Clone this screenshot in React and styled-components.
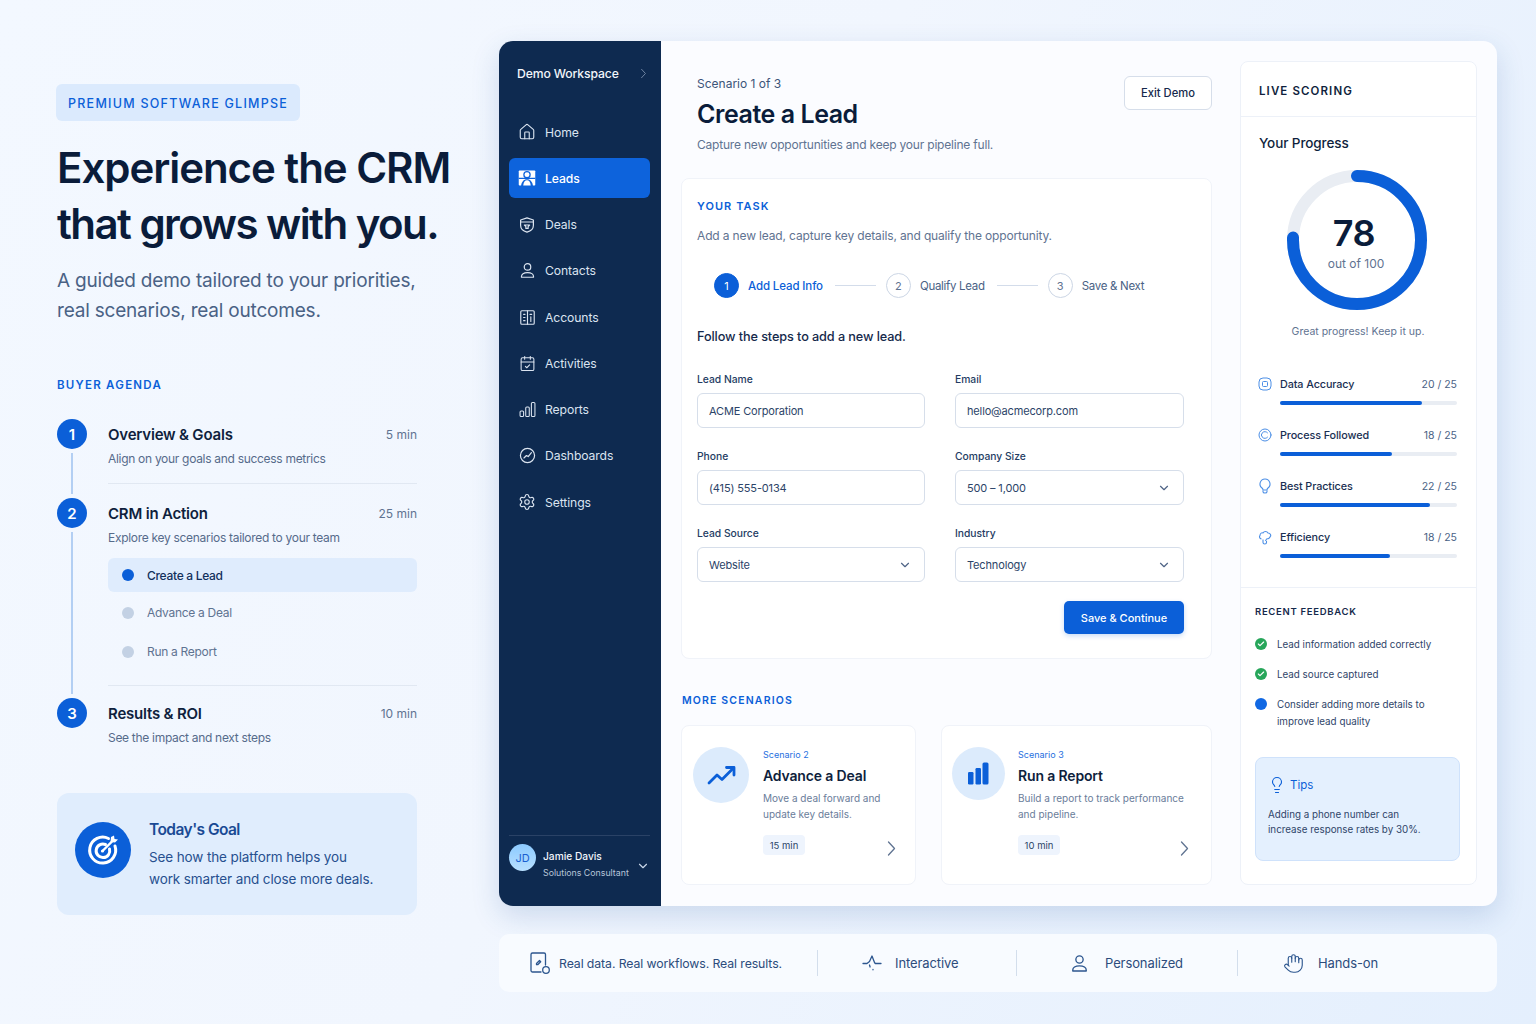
import styled, { createGlobalStyle } from "styled-components";
import {
  Home,
  CalendarCheck,
  Settings,
  Lightbulb,
  Hand,
  ChevronDown,
  Check,
} from "lucide-react";

const GlobalStyle = createGlobalStyle`
  * { box-sizing: border-box; }
  html, body { margin: 0; padding: 0; }
  body {
    font-family: Inter, "Liberation Sans", sans-serif;
    color: #0d1f3c;
  }
  p, h1, h2, h3 { margin: 0; font-weight: inherit; }
`;

function UserGlyph({ size = 18 }) {
  return (
    <svg width={size} height={size} viewBox="0 0 24 24" fill="none" stroke="currentColor" strokeWidth="1.7">
      <circle cx="12" cy="7" r="4.6" />
      <path d="M3.5 21.5v-1.2c0-3.2 3-5.3 8.500-5.300s8.500 2.100 8.500 5.300v1.200z" strokeLinejoin="round" />
    </svg>
  );
}

function LeadsGlyph() {
  return (
    <svg width="18" height="18" viewBox="0 0 24 24">
      <rect x="1" y="2" width="22" height="20" rx="1" fill="#fff" />
      <path d="M1 12.500h22" stroke="#0d63dc" strokeWidth="1.600" />
      <path d="M4 23c.5-6 3.500-9.500 8-9.500s7.500 3.500 8 9.500z" fill="#0d63dc" />
      <path d="M7 22c.4-4.500 2.300-7 5-7s4.600 2.500 5 7z" fill="#fff" />
      <circle cx="12" cy="7.500" r="5" fill="#0d63dc" />
      <circle cx="12" cy="7.500" r="3.300" fill="#fff" />
    </svg>
  );
}

function DealsGlyph() {
  return (
    <svg width="18" height="18" viewBox="0 0 24 24" fill="none" stroke="currentColor" strokeWidth="1.6" strokeLinejoin="round" strokeLinecap="round">
      <path d="M12 2.500l8.500 2.800v7.200c0 4.500-3.600 7.500-8.500 9-4.900-1.500-8.500-4.500-8.500-9V5.300z" />
      <path d="M3.800 8h16.400M8.500 12h7l-2 2v2.500h-3V14z" />
    </svg>
  );
}

function AccountsGlyph() {
  return (
    <svg width="17" height="17" viewBox="0 0 24 24" fill="none" stroke="currentColor" strokeWidth="1.6" strokeLinecap="round">
      <rect x="2.500" y="2.500" width="19" height="19" rx="1.500" />
      <path d="M12 2.500v19M6.500 7.500h2M6.500 12h2M6.500 16.500h2M15.500 7.500h2.500M16.700 11v6.500" />
    </svg>
  );
}

function ReportsGlyph() {
  return (
    <svg width="17" height="17" viewBox="0 0 24 24" fill="none" stroke="currentColor" strokeWidth="1.5">
      <rect x="1.500" y="14" width="5" height="8" rx="1.500" />
      <rect x="9.500" y="8.500" width="5" height="13.500" rx="1.500" />
      <rect x="17.500" y="2" width="5" height="20" rx="1.500" />
    </svg>
  );
}

function DashboardGlyph() {
  return (
    <svg width="17" height="17" viewBox="0 0 24 24" fill="none" stroke="currentColor" strokeWidth="1.7" strokeLinecap="round" strokeLinejoin="round">
      <circle cx="12" cy="12" r="10" />
      <path d="M7 15.500l3.500-3.500 2.500 1.500L17.500 8" />
    </svg>
  );
}

function Chevron({ color = "#5f7391" }) {
  return (
    <svg width="9" height="15" viewBox="0 0 9 15" fill="none" stroke={color} strokeWidth="1.3" strokeLinecap="round" strokeLinejoin="round">
      <path d="M1.500 1l6 6.500-6 6.500" />
    </svg>
  );
}

function TargetGlyph() {
  return (
    <svg width="34" height="34" viewBox="0 0 34 34" fill="none" stroke="#fff" strokeWidth="3" strokeLinecap="round">
      <path d="M22.500 5.500A13 13 0 1 0 29 13" />
      <path d="M19.500 11.500A6.800 6.800 0 1 0 23.500 16" />
      <circle cx="16.500" cy="18" r="1.600" fill="#fff" stroke="none" />
      <path d="M17 17.500L27 7.500" strokeWidth="2.400" />
      <path d="M25 4l-.5 5 4.500.5 3-3-3.500-.5-.5-3.500z" fill="#fff" stroke="none" />
    </svg>
  );
}

function TrendGlyph() {
  return (
    <svg width="29" height="20" viewBox="0 0 29 20" fill="none" stroke="#0b5fd8" strokeWidth="2.800" strokeLinecap="round" strokeLinejoin="round">
      <path d="M2 18l8-8 5 4.500L26.500 3" />
      <path d="M19.500 2.500h7.500V10" />
    </svg>
  );
}

function BarsGlyph() {
  return (
    <svg width="21" height="23" viewBox="0 0 21 23" fill="#0b5fd8">
      <rect x="0" y="10" width="5.500" height="12.500" rx="1.200" />
      <rect x="7.500" y="6" width="5.500" height="16.500" rx="1.200" />
      <rect x="14.500" y="0.500" width="6" height="22" rx="1.500" />
    </svg>
  );
}

function AccuracyGlyph() {
  return (
    <svg width="14" height="14" viewBox="0 0 14 14" fill="none" stroke="#4c8fe6" strokeWidth="1">
      <rect x="1" y="1" width="12" height="12" rx="4" />
      <rect x="4.500" y="4.500" width="5" height="5" rx="1" />
    </svg>
  );
}

function ProcessGlyph() {
  return (
    <svg width="14" height="14" viewBox="0 0 14 14" fill="none" stroke="#4c8fe6" strokeWidth="1" strokeLinecap="round">
      <circle cx="7" cy="7" r="6" />
      <path d="M9.500 4.800A3.400 3.400 0 1 0 9.500 9.200" />
    </svg>
  );
}

function BulbGlyph() {
  return (
    <svg width="14" height="16" viewBox="0 0 14 16" fill="none" stroke="#4c8fe6" strokeWidth="1.100" strokeLinejoin="round">
      <path d="M7 1a5 5 0 0 0-3 9c.6.5 1 1.100 1 2h4c0-.9.4-1.500 1-2a5 5 0 0 0-3-9z" />
      <path d="M5 12.500v1.200c0 .7.800 1.300 2 1.300s2-.6 2-1.300v-1.200" />
    </svg>
  );
}

function EfficiencyGlyph() {
  return (
    <svg width="14" height="15" viewBox="0 0 14 15" fill="none" stroke="#4c8fe6" strokeWidth="1.100" strokeLinejoin="round">
      <path d="M3.500 9C1.500 8.500 1 6.500 2 5.500 2 3 4 2.500 5 3c1-2 4-2 5 0 2.500 0 3.500 2.500 2 4-.5 1.500-2 2-3.500 2 0 1-.5 1.500-1.500 1.500" />
      <path d="M5 9.500v3c0 1 .8 1.500 1.800 1.500s1.700-.5 1.700-1.500V11" />
    </svg>
  );
}

function TabletGlyph() {
  return (
    <svg width="22" height="24" viewBox="0 0 22 24" fill="none" stroke="#2c568f" strokeWidth="1.300" strokeLinecap="round" strokeLinejoin="round">
      <path d="M12 21H3.500A1.500 1.500 0 0 1 2 19.500v-16A1.500 1.500 0 0 1 3.500 2h11.500A1.500 1.500 0 0 1 16.500 3.500V14" />
      <path d="M7.500 12.500l3-3 1.200 1.200-3 3H7.500z" />
      <circle cx="17" cy="19" r="3.300" />
    </svg>
  );
}

function PulseGlyph() {
  return (
    <svg width="20" height="18" viewBox="0 0 20 18" fill="none" stroke="#2c568f" strokeWidth="1.300" strokeLinecap="round" strokeLinejoin="round">
      <path d="M1 9.500h4l2.500-2L10 2l2.500 6.500.8 1H19" />
      <path d="M7.500 11l.6 2M11 15.500v.3" />
    </svg>
  );
}

const agenda = [
  { n: 1, title: "Overview & Goals", time: "5 min", desc: "Align on your goals and success metrics", divider: true },
  {
    n: 2,
    title: "CRM in Action",
    time: "25 min",
    desc: "Explore key scenarios tailored to your team",
    subs: ["Create a Lead", "Advance a Deal", "Run a Report"],
    divider: true,
  },
  { n: 3, title: "Results & ROI", time: "10 min", desc: "See the impact and next steps" },
];

const navItems = [
  { label: "Home", icon: <Home size={18} strokeWidth={1.5} /> },
  { label: "Leads", icon: <LeadsGlyph />, active: true },
  { label: "Deals", icon: <DealsGlyph /> },
  { label: "Contacts", icon: <UserGlyph size={17} /> },
  { label: "Accounts", icon: <AccountsGlyph /> },
  { label: "Activities", icon: <CalendarCheck size={17} strokeWidth={1.5} /> },
  { label: "Reports", icon: <ReportsGlyph /> },
  { label: "Dashboards", icon: <DashboardGlyph /> },
  { label: "Settings", icon: <Settings size={18} strokeWidth={1.5} /> },
];

const scores = [
  { label: "Data Accuracy", value: "20 / 25", pct: 80, icon: <AccuracyGlyph /> },
  { label: "Process Followed", value: "18 / 25", pct: 63, icon: <ProcessGlyph /> },
  { label: "Best Practices", value: "22 / 25", pct: 85, icon: <BulbGlyph /> },
  { label: "Efficiency", value: "18 / 25", pct: 62, icon: <EfficiencyGlyph /> },
];

const ringLength = 2 * Math.PI * 64;

function App() {
  return (
    <Page>
      <GlobalStyle />
      <Intro>
        <Badge>PREMIUM SOFTWARE GLIMPSE</Badge>
        <Headline>
          <HeadlineLine>Experience the CRM</HeadlineLine>
          <HeadlineLine $tight>that grows with you.</HeadlineLine>
        </Headline>
        <Lead>
          A guided demo tailored to your priorities,
          <br />
          real scenarios, real outcomes.
        </Lead>
        <AgendaLabel>BUYER AGENDA</AgendaLabel>
        <Agenda>
          {agenda.map((step, i) => (
            <Step key={step.n}>
              <Rail>
                <StepNumber>{step.n}</StepNumber>
                {i < agenda.length - 1 && <RailLine />}
              </Rail>
              <StepBody>
                <StepHead>
                  <StepTitle>{step.title}</StepTitle>
                  <StepTime>{step.time}</StepTime>
                </StepHead>
                <StepDesc>{step.desc}</StepDesc>
                {step.subs && (
                  <SubList>
                    {step.subs.map((s, j) => (
                      <SubItem key={s} $active={j === 0}>
                        <SubDot $active={j === 0} />
                        {s}
                      </SubItem>
                    ))}
                  </SubList>
                )}
                {step.divider && <StepRule $sub={!!step.subs} />}
              </StepBody>
            </Step>
          ))}
        </Agenda>
        <GoalCard>
          <GoalIcon>
            <TargetGlyph />
          </GoalIcon>
          <div>
            <GoalTitle>Today's Goal</GoalTitle>
            <GoalText>
              See how the platform helps you
              <br />
              work smarter and close more deals.
            </GoalText>
          </div>
        </GoalCard>
      </Intro>

      <Stage>
        <Shell>
          <Sidebar>
            <Workspace>
              Demo Workspace
              <Chevron color="#7f93b0" />
            </Workspace>
            <NavList>
              {navItems.map((item) => (
                <NavItem key={item.label} $active={item.active}>
                  <NavIcon>{item.icon}</NavIcon>
                  {item.label}
                </NavItem>
              ))}
            </NavList>
            <Profile>
              <Avatar>JD</Avatar>
              <ProfileText>
                <ProfileName>Jamie Davis</ProfileName>
                <ProfileRole>Solutions Consultant</ProfileRole>
              </ProfileText>
              <ChevronDown size={14} color="#c9d6e8" />
            </Profile>
          </Sidebar>

          <Main>
            <Center>
              <Header>
                <div>
                  <ScenarioCount>Scenario 1 of 3</ScenarioCount>
                  <PageTitle>Create a Lead</PageTitle>
                  <PageSub>Capture new opportunities and keep your pipeline full.</PageSub>
                </div>
                <ExitButton>Exit Demo</ExitButton>
              </Header>

              <TaskCard>
                <TaskLabel>YOUR TASK</TaskLabel>
                <TaskDesc>Add a new lead, capture key details, and qualify the opportunity.</TaskDesc>
                <Stepper>
                  <StepDot $active>1</StepDot>
                  <StepName $active>Add Lead Info</StepName>
                  <StepLink />
                  <StepDot>2</StepDot>
                  <StepName>Qualify Lead</StepName>
                  <StepLink />
                  <StepDot>3</StepDot>
                  <StepName>Save &amp; Next</StepName>
                </Stepper>
                <FollowText>Follow the steps to add a new lead.</FollowText>
                <FormGrid>
                  <Field>
                    <FieldLabel>Lead Name</FieldLabel>
                    <FieldBox>ACME Corporation</FieldBox>
                  </Field>
                  <Field>
                    <FieldLabel>Email</FieldLabel>
                    <FieldBox>hello@acmecorp.com</FieldBox>
                  </Field>
                  <Field>
                    <FieldLabel>Phone</FieldLabel>
                    <FieldBox>(415) 555-0134</FieldBox>
                  </Field>
                  <Field>
                    <FieldLabel>Company Size</FieldLabel>
                    <FieldBox>
                      500 – 1,000
                      <ChevronDown size={14} color="#4f6486" />
                    </FieldBox>
                  </Field>
                  <Field>
                    <FieldLabel>Lead Source</FieldLabel>
                    <FieldBox>
                      Website
                      <ChevronDown size={14} color="#4f6486" />
                    </FieldBox>
                  </Field>
                  <Field>
                    <FieldLabel>Industry</FieldLabel>
                    <FieldBox>
                      Technology
                      <ChevronDown size={14} color="#4f6486" />
                    </FieldBox>
                  </Field>
                </FormGrid>
                <FormActions>
                  <SaveButton>Save &amp; Continue</SaveButton>
                </FormActions>
              </TaskCard>

              <MoreLabel>MORE SCENARIOS</MoreLabel>
              <ScenarioGrid>
                <ScenarioCard $left={11} $right={19}>
                  <ScenarioIcon $size={56} $after={14}>
                    <TrendGlyph />
                  </ScenarioIcon>
                  <ScenarioText>
                    <ScenarioTag>Scenario 2</ScenarioTag>
                    <ScenarioTitle>Advance a Deal</ScenarioTitle>
                    <ScenarioDesc>
                      Move a deal forward and
                      <br />
                      update key details.
                    </ScenarioDesc>
                    <ScenarioFoot>
                      <TimePill>15 min</TimePill>
                      <ChevronSlot>
                        <Chevron />
                      </ChevronSlot>
                    </ScenarioFoot>
                  </ScenarioText>
                </ScenarioCard>
                <ScenarioCard $left={10} $right={22}>
                  <ScenarioIcon $size={53} $after={13}>
                    <BarsGlyph />
                  </ScenarioIcon>
                  <ScenarioText>
                    <ScenarioTag>Scenario 3</ScenarioTag>
                    <ScenarioTitle>Run a Report</ScenarioTitle>
                    <ScenarioDesc>
                      Build a report to track performance
                      <br />
                      and pipeline.
                    </ScenarioDesc>
                    <ScenarioFoot>
                      <TimePill>10 min</TimePill>
                      <ChevronSlot>
                        <Chevron />
                      </ChevronSlot>
                    </ScenarioFoot>
                  </ScenarioText>
                </ScenarioCard>
              </ScenarioGrid>
            </Center>

            <ScorePanel>
              <ScoreHeader>LIVE SCORING</ScoreHeader>
              <ScoreBody>
                <ProgressTitle>Your Progress</ProgressTitle>
                <Ring>
                  <svg width="140" height="140" viewBox="0 0 140 140">
                    <circle cx="70" cy="70" r="64" fill="none" stroke="#e9edf3" strokeWidth="12" />
                    <circle
                      cx="70"
                      cy="70"
                      r="64"
                      fill="none"
                      stroke="#0b5fd8"
                      strokeWidth="12"
                      strokeLinecap="round"
                      strokeDasharray={`${ringLength * 0.755} ${ringLength}`}
                      transform="rotate(-90 70 70)"
                    />
                  </svg>
                  <RingCenter>
                    <RingValue>78</RingValue>
                    <RingOf>out of 100</RingOf>
                  </RingCenter>
                </Ring>
                <RingNote>Great progress! Keep it up.</RingNote>
                <ScoreList>
                  {scores.map((s) => (
                    <div key={s.label}>
                      <ScoreRow>
                        <ScoreIcon>{s.icon}</ScoreIcon>
                        <ScoreName>{s.label}</ScoreName>
                        <ScoreValue>{s.value}</ScoreValue>
                      </ScoreRow>
                      <ScoreTrack>
                        <ScoreFill style={{ width: `${s.pct}%` }} />
                      </ScoreTrack>
                    </div>
                  ))}
                </ScoreList>
              </ScoreBody>
              <FeedbackSection>
                <FeedbackTitle>RECENT FEEDBACK</FeedbackTitle>
                <FeedbackList>
                  <FeedbackRow>
                    <FeedbackMark $ok>
                      <Check size={8} strokeWidth={3.5} color="#fff" />
                    </FeedbackMark>
                    Lead information added correctly
                  </FeedbackRow>
                  <FeedbackRow>
                    <FeedbackMark $ok>
                      <Check size={8} strokeWidth={3.5} color="#fff" />
                    </FeedbackMark>
                    Lead source captured
                  </FeedbackRow>
                  <FeedbackRow>
                    <FeedbackMark />
                    <span>
                      Consider adding more details to
                      <br />
                      improve lead quality
                    </span>
                  </FeedbackRow>
                </FeedbackList>
                <TipsCard>
                  <TipsHead>
                    <Lightbulb size={18} strokeWidth={1.5} />
                    Tips
                  </TipsHead>
                  <TipsText>
                    Adding a phone number can
                    <br />
                    increase response rates by 30%.
                  </TipsText>
                </TipsCard>
              </FeedbackSection>
            </ScorePanel>
          </Main>
        </Shell>

        <Strip>
          <StripItem $width={318} $left={30}>
            <TabletGlyph />
            <StripLabel $gap={8} $size={12.3}>Real data. Real workflows. Real results.</StripLabel>
          </StripItem>
          <StripRule />
          <StripItem $width={198} $left={44}>
            <PulseGlyph />
            <StripLabel $gap={13} $size={13}>Interactive</StripLabel>
          </StripItem>
          <StripRule />
          <StripItem $width={220} $left={53}>
            <UserGlyph size={19} />
            <StripLabel $gap={16} $size={13}>Personalized</StripLabel>
          </StripItem>
          <StripRule />
          <StripItem $width={259} $left={45}>
            <Hand size={21} strokeWidth={1.3} />
            <StripLabel $gap={14} $size={13}>Hands-on</StripLabel>
          </StripItem>
        </Strip>
      </Stage>
    </Page>
  );
}

const Page = styled.div`
  width: 1536px;
  height: 1024px;
  overflow: hidden;
  display: flex;
  background: linear-gradient(115deg, #f3f8ff 0%, #f1f6fe 45%, #e4effd 100%);
`;

/* left column */
const Intro = styled.section`
  width: 499px;
  padding: 84px 82px 0 57px;
  flex-shrink: 0;
`;
const Badge = styled.div`
  display: inline-flex;
  align-items: center;
  height: 37px;
  margin-left: -1px;
  padding: 1px 12px 0;
  width: 244px;
  border-radius: 6px;
  background: #dbeafd;
  color: #0b5fd8;
  font-size: 12.5px;
  font-weight: 500;
  letter-spacing: 1.25px;
  white-space: nowrap;
`;
const Headline = styled.h1`
  margin-top: 19px;
  font-size: 42px;
  line-height: 56px;
  font-weight: 600;
  color: #0a1c3a;
  white-space: nowrap;
`;
const HeadlineLine = styled.span`
  display: block;
  letter-spacing: ${(p) => (p.$tight ? "-1.55px" : "-1.05px")};
`;
const Lead = styled.p`
  margin-top: 14px;
  font-size: 19px;
  line-height: 30px;
  color: #4a6285;
  letter-spacing: -0.2px;
  white-space: nowrap;
`;
const AgendaLabel = styled.div`
  margin-top: 51px;
  font-size: 11.5px;
  line-height: 16px;
  font-weight: 600;
  letter-spacing: 1.25px;
  color: #0b5fd8;
`;
const Agenda = styled.div`
  margin-top: 26px;
`;
const Step = styled.div`
  display: flex;
  gap: 21px;
`;
const Rail = styled.div`
  width: 30px;
  display: flex;
  flex-direction: column;
  align-items: center;
  flex-shrink: 0;
`;
const StepNumber = styled.div`
  width: 30px;
  height: 30px;
  border-radius: 50%;
  background: #0b5fd8;
  color: #fff;
  font-size: 15px;
  font-weight: 600;
  display: flex;
  align-items: center;
  justify-content: center;
  flex-shrink: 0;
`;
const RailLine = styled.div`
  flex: 1;
  width: 2px;
  margin: 4px 0;
  background: #b3cff3;
`;
const StepBody = styled.div`
  flex: 1;
  min-width: 0;
`;
const StepHead = styled.div`
  height: 30px;
  display: flex;
  align-items: center;
  justify-content: space-between;
`;
const StepTitle = styled.div`
  font-size: 15px;
  font-weight: 600;
  letter-spacing: -0.2px;
  color: #0f1f3d;
`;
const StepTime = styled.div`
  font-size: 12px;
  color: #5f7391;
`;
const StepDesc = styled.div`
  font-size: 12px;
  line-height: 18px;
  letter-spacing: -0.3px;
  color: #566b8b;
  padding-top: 1px;
  margin-bottom: -1px;
`;
const SubList = styled.div`
  margin-top: 12px;
  display: flex;
  flex-direction: column;
  gap: 2px;
`;
const SubItem = styled.div`
  height: ${(p) => (p.$active ? "34px" : "37px")};
  display: flex;
  align-items: center;
  gap: 13px;
  padding-left: 14px;
  border-radius: 6px;
  background: ${(p) => (p.$active ? "#dfecfd" : "transparent")};
  color: ${(p) => (p.$active ? "#12305c" : "#5f7391")};
  font-size: 12px;
  font-weight: ${(p) => (p.$active ? 500 : 400)};
  letter-spacing: -0.3px;
`;
const SubDot = styled.span`
  width: 12px;
  height: 12px;
  border-radius: 50%;
  background: ${(p) => (p.$active ? "#0b5fd8" : "#c3d1e4")};
`;
const StepRule = styled.div`
  height: 1px;
  background: #e1e8f2;
  margin: ${(p) => (p.$sub ? "15px 0 12px" : "16px 0 14px")};
`;
const GoalCard = styled.div`
  margin-top: 47px;
  width: 360px;
  height: 122px;
  padding-left: 18px;
  display: flex;
  align-items: center;
  gap: 18px;
  border-radius: 12px;
  background: #e0edfd;
`;
const GoalIcon = styled.div`
  width: 56px;
  height: 56px;
  margin-top: -8px;
  border-radius: 50%;
  background: #0b5fd8;
  display: flex;
  align-items: center;
  justify-content: center;
  flex-shrink: 0;
`;
const GoalTitle = styled.div`
  font-size: 15.5px;
  line-height: 22px;
  font-weight: 600;
  letter-spacing: -0.55px;
  color: #1a4a94;
`;
const GoalText = styled.p`
  margin-top: 5px;
  font-size: 13.5px;
  line-height: 22px;
  letter-spacing: -0.12px;
  color: #27508f;
  white-space: nowrap;
`;

/* right side */
const Stage = styled.div`
  width: 998px;
  padding-top: 41px;
`;
const Shell = styled.div`
  height: 865px;
  display: flex;
  border-radius: 14px;
  background: #fbfcff;
  box-shadow: 0 10px 28px rgba(40, 90, 160, 0.18);
  overflow: hidden;
`;
const Sidebar = styled.aside`
  width: 162px;
  flex-shrink: 0;
  display: flex;
  flex-direction: column;
  background: #0e2a50;
  color: #e6edf7;
`;
const Workspace = styled.div`
  height: 64px;
  padding: 0 13px 0 18px;
  display: flex;
  align-items: center;
  justify-content: space-between;
  font-size: 12.2px;
  font-weight: 500;
  letter-spacing: -0.12px;
  color: #f2f6fb;
  white-space: nowrap;
  svg { transform: scale(0.65); }
`;
const NavList = styled.nav`
  margin: 7px 11px 0 10px;
  display: flex;
  flex-direction: column;
  gap: 6.25px;
`;
const NavItem = styled.div`
  height: 40px;
  display: flex;
  align-items: center;
  gap: 9px;
  padding-left: 9px;
  border-radius: 6px;
  font-size: 12.2px;
  letter-spacing: -0.1px;
  color: ${(p) => (p.$active ? "#fff" : "#dbe4f0")};
  font-weight: ${(p) => (p.$active ? 500 : 400)};
  background: ${(p) => (p.$active ? "#0d63dc" : "transparent")};
`;
const NavIcon = styled.span`
  width: 18px;
  display: flex;
  justify-content: center;
`;
const Profile = styled.div`
  margin: auto 11px 0 10px;
  height: 71px;
  padding-top: 8px;
  border-top: 1px solid #2a4266;
  display: flex;
  align-items: flex-start;
  svg { margin: 15px 0 0 auto; }
`;
const Avatar = styled.div`
  width: 27px;
  height: 27px;
  border-radius: 50%;
  background: linear-gradient(180deg, #8ccaff, #b8e0ff);
  color: #1a5fd0;
  font-size: 11px;
  display: flex;
  align-items: center;
  justify-content: center;
  flex-shrink: 0;
`;
const ProfileText = styled.div`
  margin: 5px 0 0 7px;
  white-space: nowrap;
`;
const ProfileName = styled.div`
  font-size: 10.2px;
  line-height: 14px;
  font-weight: 500;
  color: #f2f6fb;
`;
const ProfileRole = styled.div`
  margin-top: 3px;
  font-size: 8.8px;
  line-height: 14px;
  color: #b7c5d9;
`;
const Main = styled.main`
  flex: 1;
  min-width: 0;
  padding: 0 20px;
  display: flex;
  gap: 28px;
  align-items: flex-start;
`;
const Center = styled.div`
  width: 531px;
  flex-shrink: 0;
  padding-top: 35px;
`;
const Header = styled.header`
  padding-left: 16px;
  display: flex;
  justify-content: space-between;
  align-items: flex-start;
`;
const ScenarioCount = styled.div`
  font-size: 12px;
  line-height: 16px;
  color: #3c5479;
`;
const PageTitle = styled.h2`
  margin-top: 5px;
  font-size: 25px;
  line-height: 34px;
  font-weight: 600;
  letter-spacing: -0.45px;
  color: #0a1c3a;
`;
const PageSub = styled.p`
  margin-top: 5px;
  font-size: 12px;
  line-height: 18px;
  letter-spacing: -0.2px;
  color: #5f7391;
`;
const ExitButton = styled.div`
  width: 88px;
  height: 34px;
  border: 1px solid #d6deea;
  border-radius: 6px;
  background: #fff;
  display: flex;
  align-items: center;
  justify-content: center;
  font-size: 11.2px;
  font-weight: 500;
  color: #15294b;
`;
const TaskCard = styled.section`
  margin-top: 24px;
  height: 481px;
  padding: 19px 27px 0 15px;
  border: 1px solid #f0f3f9;
  border-radius: 8px;
  background: #fff;
`;
const TaskLabel = styled.div`
  font-size: 11px;
  line-height: 16px;
  font-weight: 600;
  letter-spacing: 1.05px;
  color: #0b5fd8;
`;
const TaskDesc = styled.p`
  margin-top: 13px;
  font-size: 12px;
  line-height: 18px;
  letter-spacing: -0.15px;
  color: #5f7391;
`;
const Stepper = styled.div`
  margin-top: 28px;
  padding-left: 17px;
  height: 25px;
  display: flex;
  align-items: center;
`;
const StepDot = styled.div`
  width: 25px;
  height: 25px;
  border-radius: 50%;
  border: 1px solid ${(p) => (p.$active ? "#0b5fd8" : "#ccd6e5")};
  background: ${(p) => (p.$active ? "#0b5fd8" : "#fff")};
  color: ${(p) => (p.$active ? "#fff" : "#5f7391")};
  font-size: 11px;
  display: flex;
  align-items: center;
  justify-content: center;
  flex-shrink: 0;
`;
const StepName = styled.span`
  margin-left: 9px;
  font-size: 11.5px;
  letter-spacing: ${(p) => (p.$active ? "-0.12px" : "-0.3px")};
  font-weight: ${(p) => (p.$active ? 500 : 400)};
  color: ${(p) => (p.$active ? "#0b5fd8" : "#4a6285")};
  white-space: nowrap;
`;
const StepLink = styled.span`
  width: 41px;
  height: 1px;
  margin: 0 10px 0 12px;
  background: #d3dcea;
`;
const FollowText = styled.p`
  margin-top: 30px;
  font-size: 12.7px;
  line-height: 18px;
  font-weight: 500;
  letter-spacing: -0.1px;
  color: #15294b;
`;
const FormGrid = styled.div`
  margin-top: 26px;
  display: grid;
  grid-template-columns: 228px 229px;
  column-gap: 30px;
  row-gap: 21px;
`;
const Field = styled.div`
  display: flex;
  flex-direction: column;
  gap: 7px;
`;
const FieldLabel = styled.label`
  font-size: 10.3px;
  line-height: 14px;
  font-weight: 500;
  color: #243c63;
`;
const FieldBox = styled.div`
  height: 35px;
  padding: 0 12px 0 11px;
  display: flex;
  align-items: center;
  justify-content: space-between;
  border: 1px solid #d6deea;
  border-radius: 6px;
  background: #fff;
  font-size: 11px;
  letter-spacing: -0.15px;
  color: #2c4468;
`;
const FormActions = styled.div`
  margin-top: 19px;
  display: flex;
  justify-content: flex-end;
`;
const SaveButton = styled.div`
  width: 120px;
  height: 33px;
  border-radius: 5px;
  background: #0b5fd8;
  box-shadow: 0 2px 5px rgba(11, 95, 216, 0.22);
  color: #fff;
  font-size: 11px;
  font-weight: 500;
  display: flex;
  align-items: center;
  justify-content: center;
`;
const MoreLabel = styled.div`
  margin-top: 33px;
  padding-left: 1px;
  font-size: 10.5px;
  line-height: 18px;
  font-weight: 600;
  letter-spacing: 1.15px;
  color: #0b5fd8;
`;
const ScenarioGrid = styled.div`
  margin-top: 15px;
  display: grid;
  grid-template-columns: 235px 271px;
  column-gap: 25px;
`;
const ScenarioCard = styled.article`
  height: 160px;
  padding: 21px ${(p) => p.$right}px 0 ${(p) => p.$left}px;
  display: flex;
  align-items: flex-start;
  border: 1px solid #f0f3f9;
  border-radius: 8px;
  background: #fff;
`;
const ScenarioIcon = styled.div`
  width: ${(p) => p.$size}px;
  height: ${(p) => p.$size}px;
  margin-right: ${(p) => p.$after}px;
  border-radius: 50%;
  background: #dcebfc;
  display: flex;
  align-items: center;
  justify-content: center;
  flex-shrink: 0;
`;
const ScenarioText = styled.div`
  flex: 1;
  min-width: 0;
  padding-top: 1px;
`;
const ScenarioTag = styled.div`
  font-size: 9px;
  line-height: 14px;
  color: #1f6fe0;
`;
const ScenarioTitle = styled.h3`
  margin-top: 4px;
  font-size: 14px;
  line-height: 20px;
  font-weight: 600;
  letter-spacing: -0.15px;
  color: #0f1f3d;
`;
const ScenarioDesc = styled.p`
  margin-top: 4px;
  font-size: 10px;
  line-height: 16px;
  color: #6a7d9a;
  white-space: nowrap;
`;
const ScenarioFoot = styled.div`
  margin-top: 13px;
  display: flex;
  justify-content: space-between;
  align-items: flex-start;
`;
const TimePill = styled.span`
  width: 42px;
  height: 20px;
  border-radius: 4px;
  background: #eef4fd;
  font-size: 9.5px;
  color: #2c4468;
  display: flex;
  align-items: center;
  justify-content: center;
`;
const ChevronSlot = styled.span`
  display: flex;
  margin-top: 6px;
`;
const ScorePanel = styled.aside`
  width: 237px;
  height: 824px;
  margin-top: 20px;
  flex-shrink: 0;
  border: 1px solid #edf1f8;
  border-radius: 8px;
  background: #fff;
`;
const ScoreHeader = styled.div`
  height: 55px;
  padding: 21px 0 0 18px;
  border-bottom: 1px solid #edf1f8;
  font-size: 11.5px;
  line-height: 16px;
  font-weight: 600;
  letter-spacing: 1.1px;
  color: #0f1f3d;
`;
const ScoreBody = styled.div`
  height: 471px;
  padding: 16px 19px 0 18px;
  border-bottom: 1px solid #edf1f8;
`;
const ProgressTitle = styled.div`
  font-size: 13.5px;
  line-height: 20px;
  font-weight: 500;
  letter-spacing: -0.1px;
  color: #0f1f3d;
`;
const Ring = styled.div`
  position: relative;
  width: 140px;
  height: 140px;
  margin: 17px 0 0 28px;
`;
const RingCenter = styled.div`
  position: absolute;
  inset: 0;
  padding-top: 42px;
  text-align: center;
`;
const RingValue = styled.div`
  padding-right: 6px;
  font-size: 36px;
  line-height: 42px;
  font-weight: 600;
  letter-spacing: -0.5px;
  color: #0a1c3a;
`;
const RingOf = styled.div`
  padding-right: 2px;
  margin-top: 2px;
  font-size: 12px;
  line-height: 16px;
  color: #5f7391;
`;
const RingNote = styled.div`
  margin-top: 14px;
  font-size: 10.5px;
  line-height: 16px;
  text-align: center;
  color: #5f7391;
  white-space: nowrap;
`;
const ScoreList = styled.div`
  margin-top: 36px;
  display: flex;
  flex-direction: column;
  gap: 22px;
`;
const ScoreRow = styled.div`
  height: 16px;
  display: flex;
  align-items: center;
`;
const ScoreIcon = styled.span`
  width: 21px;
  margin-left: -1px;
  margin-right: 1px;
  display: flex;
`;
const ScoreName = styled.span`
  flex: 1;
  font-size: 10.8px;
  font-weight: 500;
  letter-spacing: -0.1px;
  color: #1a2f52;
`;
const ScoreValue = styled.span`
  font-size: 10.5px;
  color: #4a6285;
`;
const ScoreTrack = styled.div`
  margin: 9px 0 0 21px;
  height: 4px;
  border-radius: 2px;
  background: #e9edf3;
`;
const ScoreFill = styled.div`
  height: 100%;
  border-radius: 2px;
  background: #0b5fd8;
`;
const FeedbackSection = styled.div`
  padding: 17px 16px 0 14px;
`;
const FeedbackTitle = styled.div`
  font-size: 9.5px;
  line-height: 14px;
  font-weight: 600;
  letter-spacing: 0.7px;
  color: #15294b;
`;
const FeedbackList = styled.div`
  margin-top: 17px;
  display: flex;
  flex-direction: column;
  gap: 13px;
`;
const FeedbackRow = styled.div`
  display: flex;
  align-items: flex-start;
  gap: 10px;
  font-size: 9.8px;
  line-height: 17px;
  color: #2f4569;
  white-space: nowrap;
`;
const FeedbackMark = styled.span`
  width: 12px;
  height: 12px;
  margin-top: 2px;
  border-radius: 50%;
  background: ${(p) => (p.$ok ? "#27a65a" : "#1168e3")};
  display: flex;
  align-items: center;
  justify-content: center;
  flex-shrink: 0;
`;
const TipsCard = styled.div`
  margin-top: 27px;
  height: 104px;
  padding: 18px 12px 0;
  border: 1px solid #cfe2fb;
  border-radius: 8px;
  background: #e4f0fe;
`;
const TipsHead = styled.div`
  height: 18px;
  display: flex;
  align-items: center;
  gap: 4px;
  font-size: 11.5px;
  color: #0b5fd8;
`;
const TipsText = styled.p`
  margin-top: 13px;
  font-size: 9.8px;
  line-height: 15px;
  color: #2f4569;
  white-space: nowrap;
`;
const Strip = styled.div`
  margin-top: 28px;
  height: 58px;
  display: flex;
  align-items: center;
  border-radius: 10px;
  background: #f8fbff;
`;
const StripItem = styled.div`
  width: ${(p) => p.$width}px;
  padding-left: ${(p) => p.$left}px;
  display: flex;
  align-items: center;
  color: #2c568f;
  flex-shrink: 0;
`;
const StripLabel = styled.span`
  margin-left: ${(p) => p.$gap}px;
  font-size: ${(p) => p.$size}px;
  letter-spacing: -0.1px;
  color: #2c4c7c;
  white-space: nowrap;
`;
const StripRule = styled.div`
  width: 1px;
  height: 26px;
  background: #d3deec;
  flex-shrink: 0;
`;

export default App;
